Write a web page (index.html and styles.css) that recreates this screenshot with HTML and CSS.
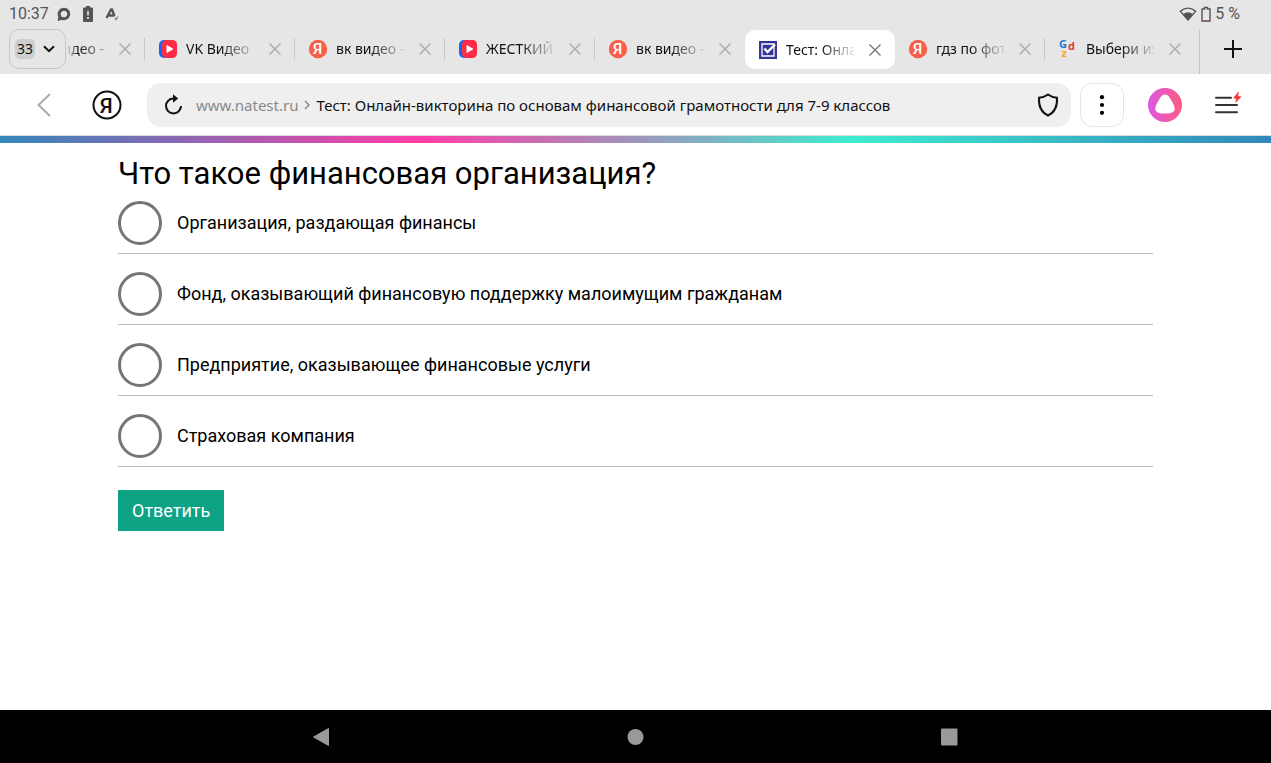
FILE: index.html
```html
<!DOCTYPE html>
<html lang="ru">
<head>
<meta charset="utf-8">
<meta name="viewport" content="width=device-width, initial-scale=1">
<title>Тест: Онлайн-викторина по основам финансовой грамотности для 7-9 классов</title>
<link rel="stylesheet" href="styles.css">
</head>
<body>
<svg class="sprite" aria-hidden="true">
  <symbol id="close" viewBox="0 0 22 22"><path d="M5.500 5.500l11 11M16.500 5.500l-11 11" fill="none" stroke="currentColor" stroke-width="1.400"/></symbol>
  <symbol id="vk" viewBox="0 0 20 20"><rect x="1" y="1" width="15" height="18" rx="5" fill="#0a6cf5"/><rect x="4" y="1" width="15" height="18" rx="4.500" fill="#ff2b47"/><path d="M8.500 6.600v6.800q0 .7.7.3l5.600-3.200q.8-.5 0-1L9.200 6.300q-.7-.4-.7.3z" fill="#fff"/></symbol>
  <symbol id="ya" viewBox="0 0 20 20"><circle cx="10" cy="10" r="9.200" fill="#f8604a"/><text class="ya-letter" x="9.600" y="15.200" text-anchor="middle">Я</text></symbol>
</svg>
<div class="screen">
  <header class="browser">
    <div class="status">
      <span>10:37</span>
      <svg class="status-chat" width="14" height="14" viewBox="0 0 14 14"><path d="M7 2.200a4.800 4.800 0 1 1-2 9.200L2.400 12l.5-2.500A4.800 4.800 0 0 1 7 2.200z" fill="none" stroke="#555" stroke-width="3"/></svg>
      <svg class="status-alert" width="10" height="16" viewBox="0 0 10 16"><path d="M3 0h4v1.500h2q1 0 1 1V15q0 1-1 1H1q-1 0-1-1V2.500q0-1 1-1h2z" fill="#555"/><path d="M5 5v4.500M5 11v2" stroke="#e6e6e6" stroke-width="1.600"/></svg>
      <svg class="status-a" width="14" height="14" viewBox="0 0 14 14"><path d="M1.500 11L6 2.500h1L9.500 9M3 8.500h6.500" fill="none" stroke="#555" stroke-width="2.400" stroke-linejoin="round"/><path d="M9.800 11.200l1.200 1.300 2-3" fill="none" stroke="#777" stroke-width="1.200"/></svg>
      <div class="status-right">
        <svg width="18" height="14" viewBox="0 0 18 14"><path d="M1.300 4.200Q9-2 16.700 4.200L9 13z" fill="none" stroke="#555" stroke-width="1.400"/><path d="M4 7.200Q9 3.400 14 7.200L9 13z" fill="#555"/></svg>
        <svg width="10" height="16" viewBox="0 0 10 16"><path d="M1 3h2.500V1.500h3V3H9v12H1z" fill="none" stroke="#555" stroke-width="1.400"/><path d="M2 14.700h6" stroke="#a0605a"/></svg>
        <span>5 %</span>
      </div>
    </div>
    <nav class="tabs" aria-label="Вкладки">
      <button class="counter" aria-label="33 вкладки">
        <span class="counter-badge">33</span>
        <svg width="12" height="8" viewBox="0 0 12 8"><path d="M1 1.200l5 5 5-5" fill="none" stroke="#111" stroke-width="2"/></svg>
      </button>
      <div class="tab tab-cut"><span class="tab-label"><span>вк видео -</span></span><button class="tab-close" aria-label="Закрыть"><svg><use href="#close"/></svg></button></div>
      <div class="tab"><svg class="favicon"><use href="#vk"/></svg><span class="tab-label">VK Видео</span><button class="tab-close" aria-label="Закрыть"><svg><use href="#close"/></svg></button></div>
      <div class="tab"><svg class="favicon"><use href="#ya"/></svg><span class="tab-label">вк видео -</span><button class="tab-close" aria-label="Закрыть"><svg><use href="#close"/></svg></button></div>
      <div class="tab"><svg class="favicon"><use href="#vk"/></svg><span class="tab-label">ЖЕСТКИЙ</span><button class="tab-close" aria-label="Закрыть"><svg><use href="#close"/></svg></button></div>
      <div class="tab"><svg class="favicon"><use href="#ya"/></svg><span class="tab-label">вк видео -</span><button class="tab-close" aria-label="Закрыть"><svg><use href="#close"/></svg></button></div>
      <div class="tab tab-active"><svg class="favicon" viewBox="0 0 20 20"><path d="M1 1h18v18H1z" fill="#34349a"/><path d="M4 4h12v12H4z" fill="none" stroke="#fff" stroke-width="1.300"/><path d="M6.500 8.500l3 3.500L17 4.500" fill="none" stroke="#fff" stroke-width="2.400"/></svg><span class="tab-label">Тест: Онла</span><button class="tab-close" aria-label="Закрыть"><svg><use href="#close"/></svg></button></div>
      <div class="tab"><svg class="favicon"><use href="#ya"/></svg><span class="tab-label">гдз по фот</span><button class="tab-close" aria-label="Закрыть"><svg><use href="#close"/></svg></button></div>
      <div class="tab"><svg class="favicon gdz" viewBox="0 0 20 20"><text x="1" y="9" fill="#1976d2">G</text><text x="10" y="11" fill="#e53935">d</text><text x="3.500" y="18" fill="#f9a825">z</text></svg><span class="tab-label">Выбери из</span><button class="tab-close" aria-label="Закрыть"><svg><use href="#close"/></svg></button></div>
      <button class="new-tab" aria-label="Новая вкладка"><svg width="20" height="20" viewBox="0 0 20 20"><path d="M10 1v18M1 10h18" stroke="#111" stroke-width="2"/></svg></button>
    </nav>
    <div class="toolbar">
      <button class="back" aria-label="Назад"><svg width="16" height="26" viewBox="0 0 16 26"><path d="M14 2L2.500 13 14 24" fill="none" stroke="#aaa" stroke-width="2"/></svg></button>
      <button class="home" aria-label="Яндекс"><svg width="30" height="30" viewBox="0 0 30 30"><circle cx="15" cy="15" r="13.500" fill="none" stroke="#111" stroke-width="2"/><text x="14.300" y="22.500" text-anchor="middle">Я</text></svg></button>
      <div class="address">
        <button aria-label="Обновить"><svg width="20" height="22" viewBox="0 0 20 22"><path d="M13 4.500H10.500a7.500 7.500 0 1 0 7.500 7.500" fill="none" stroke="#111" stroke-width="2"/><path d="M10 .3l5.200 4.200-5.200 4.200z" fill="#111"/></svg></button>
        <div class="address-text"><span class="host">www.natest.ru</span><svg width="6" height="10" viewBox="0 0 6 10"><path d="M1 1l4 4-4 4" fill="none" stroke="#888" stroke-width="1.500"/></svg><span class="title">Тест: Онлайн-викторина по основам финансовой грамотности для 7-9 классов</span></div>
        <button aria-label="Защита"><svg width="22" height="24" viewBox="0 0 22 24"><path d="M11 1.500q4 3 9 3.300Q20.800 18 11 22.500 1.200 18 2 4.800q5-.3 9-3.300z" fill="none" stroke="#111" stroke-width="2"/></svg></button>
      </div>
      <button class="dots" aria-label="Ещё"><svg width="6" height="20" viewBox="0 0 6 20"><circle cx="3" cy="2.200" r="2.100"/><circle cx="3" cy="10" r="2.100"/><circle cx="3" cy="17.800" r="2.100"/></svg></button>
      <button class="alice" aria-label="Алиса"><svg width="34" height="34" viewBox="0 0 34 34"><defs><linearGradient id="pink" x1="0" y1="0" x2="1" y2="0"><stop offset="0" stop-color="#db57e4"/><stop offset="1" stop-color="#ff5c80"/></linearGradient></defs><circle cx="17" cy="17" r="17" fill="url(#pink)"/><path d="M17 6.500c2.500 0 4 1.700 6 5.300 2.100 3.700 4.200 7.300 3.600 10-.7 3-4.600 3.800-9.600 3.800s-8.900-.8-9.600-3.800c-.6-2.700 1.500-6.300 3.600-10 2-3.600 3.500-5.300 6-5.300z" fill="#fff"/></svg></button>
      <button class="menu" aria-label="Меню"><svg width="28" height="28" viewBox="0 0 28 28"><path d="M2 6.800h15M2 14h21M2 21.300h21" stroke="#333" stroke-width="2" stroke-linecap="round"/><path d="M24.500 1l-5 6 3 .6-.8 3.800L27 5.700l-3.200-.5z" fill="#fa3232" stroke="#fa3232" stroke-width=".5" stroke-linejoin="round"/></svg></button>
    </div>
  </header>
  <main class="page">
    <form class="quiz">
      <fieldset>
        <legend>Что такое финансовая организация?</legend>
        <label class="answer"><input type="radio" name="answer"><span>Организация, раздающая финансы</span></label>
        <label class="answer"><input type="radio" name="answer"><span>Фонд, оказывающий финансовую поддержку малоимущим гражданам</span></label>
        <label class="answer"><input type="radio" name="answer"><span>Предприятие, оказывающее финансовые услуги</span></label>
        <label class="answer"><input type="radio" name="answer"><span>Страховая компания</span></label>
      </fieldset>
      <button class="submit" type="button">Ответить</button>
    </form>
  </main>
  <footer class="system">
    <button aria-label="Назад"><svg width="18" height="20" viewBox="0 0 18 20"><path d="M16.500 1.500v17L1.500 10z" fill="#999" stroke="#999" stroke-linejoin="round"/></svg></button>
    <button aria-label="Домой"><svg width="18" height="20" viewBox="0 0 18 20"><circle cx="9.500" cy="10" r="8" fill="#999"/></svg></button>
    <button aria-label="Обзор"><svg width="18" height="20" viewBox="0 0 18 20"><rect x="0" y="1.500" width="16.500" height="17" rx="1" fill="#999"/></svg></button>
  </footer>
</div>
</body>
</html>
```
FILE: styles.css
```css
* { box-sizing: border-box; }
body { margin: 0; background: #fff; color: #000; font-family: Roboto, sans-serif; }
button { margin: 0; padding: 0; border: 0; background: none; color: inherit; font: inherit; display: flex; align-items: center; justify-content: center; flex-shrink: 0; }
svg { display: block; flex-shrink: 0; }
.sprite { position: absolute; width: 0; height: 0; }
.screen { min-height: 100vh; display: flex; flex-direction: column; }

.browser { font-family: "Noto Sans", sans-serif; }
.status { height: 28px; padding: 0 31px 0 9px; display: flex; align-items: center; background: #e6e6e6; color: #555; font: 16px/28px Roboto, sans-serif; }
.status-chat { margin-left: 8px; }
.status-alert { margin-left: 12px; }
.status-a { margin-left: 12px; }
.status-right { margin-left: auto; display: flex; align-items: center; gap: 4px; }

.tabs { height: 46px; display: flex; align-items: flex-start; background: #e6e6e6; padding: 1px 0 0 9px; }
.counter { width: 57px; height: 40px; gap: 8px; padding-right: 5px; border: 1px solid #c6c6c6; border-radius: 10px; }
.counter-badge { width: 20px; height: 20px; border-radius: 5px; background: #cecece; color: #111; font-size: 14px; line-height: 20px; }
.tab { height: 40px; flex: 0 1 150px; min-width: 60px; display: flex; align-items: center; padding: 0 9px 0 13px; position: relative; overflow: hidden; }
.tab-cut { flex: 0 0 79px; padding-left: 0; }
.tab-label { flex: 1; min-width: 0; margin: 0 10px 0 8px; overflow: hidden; white-space: nowrap; color: #111; font-size: 14px; line-height: 20px; mask-image: linear-gradient(90deg, #000 50%, rgba(0, 0, 0, 0.1)); }
.tab-cut .tab-label { display: flex; justify-content: flex-end; margin-left: 1px; mask-image: linear-gradient(90deg, transparent, #000 30%, rgba(0, 0, 0, 0.3)); }
.tab:not(.tab-active)::after { content: ""; position: absolute; right: 0; top: 9px; width: 1px; height: 22px; background: #c8c8c8; }
.tab:has(+ .tab-active)::after, .tab:has(+ .new-tab)::after { display: none; }
.favicon { width: 20px; height: 20px; }
.ya-letter { fill: #fff; font: 500 15px Roboto, sans-serif; }
.gdz text { font: 700 11px "Open Sans", sans-serif; }
.tab-close { width: 22px; height: 22px; color: #aaa; }
.tab-close svg { width: 22px; height: 22px; }
.tab-active { margin-top: 1px; height: 39px; background: #fff; border-radius: 10px; }
.tab-active .tab-close { color: #777; }
.new-tab { align-self: stretch; flex: 1 0 60px; margin-left: 4px; padding: 0 6px 5px 0; border-left: 1px solid #c6c6c6; }

.toolbar { height: 62px; display: flex; align-items: center; padding: 0 29px 0 36px; border-bottom: 1px solid #ddd; background: #fff; }
.home { margin: 0 25px 0 40px; }
.home text { font: 500 21px Roboto, sans-serif; fill: #111; }
.address { flex: 1; min-width: 0; height: 44px; display: flex; align-items: center; padding: 0 12px 0 16px; border-radius: 14px; background: #efefef; }
.address-text { flex: 1; min-width: 0; display: flex; align-items: center; gap: 6px; margin: 0 13px; overflow: hidden; white-space: nowrap; font-size: 15px; line-height: 24px; }
.host { color: #888; }
.title { color: #111; }
.dots { width: 44px; height: 44px; margin-left: 9px; border: 1px solid #e6e6e6; border-radius: 12px; }
.alice { margin: 0 32px 0 24px; }

.page { flex: 1; background: #fff; }
.page::before { content: ""; display: block; height: 7px; background: linear-gradient(90deg, #3388bb, #ff3da8 33%, #3eecd0 67%, #3388bb); }
.quiz { padding: 13px 118px 24px; }
fieldset { margin: 0; padding: 0; border: 0; min-width: 0; }
legend { padding: 0; margin-bottom: 10px; font-size: 31px; line-height: 35px; }
.answer { display: flex; align-items: center; gap: 15px; padding-bottom: 8px; margin-bottom: 18px; border-bottom: 1px solid #bbb; font-size: 18px; line-height: 24px; }
.answer:last-child { margin-bottom: 23px; }
.answer input { appearance: none; flex-shrink: 0; width: 44px; height: 44px; margin: 0; border: 3px solid #767676; border-radius: 50%; background: #fff; }
.answer input:checked { background: radial-gradient(#0ea385 50%, #fff 54%); }
.submit { padding: 8px 14px; background: #0ea385; color: #fff; font-size: 18px; line-height: 25px; }

.system { height: 53px; padding: 0 164px; display: grid; grid-template-columns: repeat(3, 1fr); align-items: center; justify-items: center; background: #000; }
```
